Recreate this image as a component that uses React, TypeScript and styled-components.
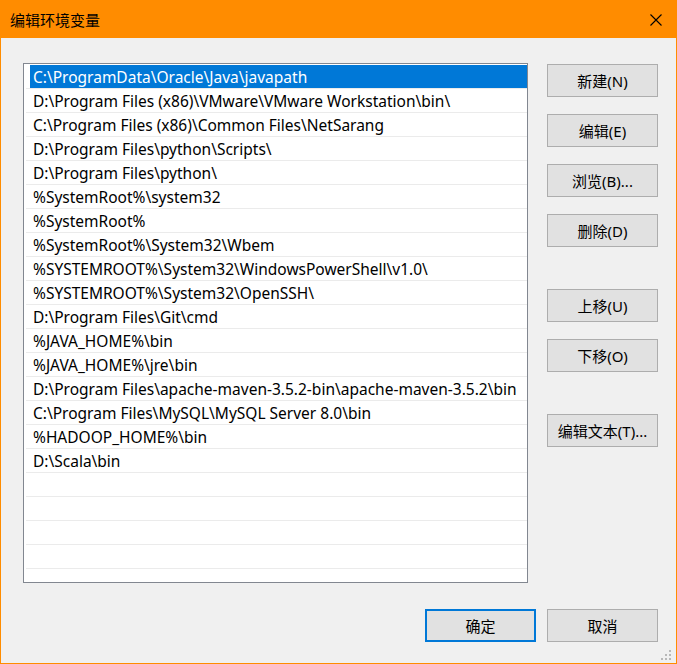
import styled, { createGlobalStyle } from 'styled-components';

const GlobalStyle = createGlobalStyle`
  html, body {
    margin: 0;
    padding: 0;
    background: #f0f0f0;
  }
  * {
    box-sizing: border-box;
  }
`;

const PATHS = [
  'C:\\ProgramData\\Oracle\\Java\\javapath',
  'D:\\Program Files (x86)\\VMware\\VMware Workstation\\bin\\',
  'C:\\Program Files (x86)\\Common Files\\NetSarang',
  'D:\\Program Files\\python\\Scripts\\',
  'D:\\Program Files\\python\\',
  '%SystemRoot%\\system32',
  '%SystemRoot%',
  '%SystemRoot%\\System32\\Wbem',
  '%SYSTEMROOT%\\System32\\WindowsPowerShell\\v1.0\\',
  '%SYSTEMROOT%\\System32\\OpenSSH\\',
  'D:\\Program Files\\Git\\cmd',
  '%JAVA_HOME%\\bin',
  '%JAVA_HOME%\\jre\\bin',
  'D:\\Program Files\\apache-maven-3.5.2-bin\\apache-maven-3.5.2\\bin',
  'C:\\Program Files\\MySQL\\MySQL Server 8.0\\bin',
  '%HADOOP_HOME%\\bin',
  'D:\\Scala\\bin',
];

const EMPTY_ROWS = 5;

const SIDE_BUTTONS = [
  { label: '新建(N)', space: 1 },
  { label: '编辑(E)', space: 17 },
  { label: '浏览(B)...', space: 17 },
  { label: '删除(D)', space: 17 },
  { label: '上移(U)', space: 42 },
  { label: '下移(O)', space: 17 },
  { label: '编辑文本(T)...', space: 42 },
];

export default function App() {
  return (
    <>
      <GlobalStyle />
      <Window>
        <TitleBar>
          <Title>编辑环境变量</Title>
          <CloseButton>
            <svg width="12" height="12" viewBox="0 0 12 12">
              <path d="M0.5 0.5 L11.5 11.5 M11.5 0.5 L0.5 11.5" stroke="#000" strokeWidth="1.1" fill="none" />
            </svg>
          </CloseButton>
        </TitleBar>

        <Body>
          <MainRow>
            <PathList>
              <Rows>
                {PATHS.map((p, i) => (
                  <Row key={p}>
                    <Cell $selected={i === 0}>{p}</Cell>
                  </Row>
                ))}
                {Array.from({ length: EMPTY_ROWS }).map((_, i) => (
                  <Row key={'empty' + i}>
                    <Cell />
                  </Row>
                ))}
              </Rows>
            </PathList>

            <SideColumn>
              {SIDE_BUTTONS.map((b) => (
                <Button key={b.label} $space={b.space}>
                  {b.label}
                </Button>
              ))}
            </SideColumn>
          </MainRow>

          <Footer>
            <Button $primary>确定</Button>
            <Button>取消</Button>
          </Footer>
        </Body>

        <Grip>
          <svg width="12" height="12" viewBox="0 0 12 12">
            <rect x="8" y="0" width="2" height="2" fill="#b8b8b8" />
            <rect x="4" y="4" width="2" height="2" fill="#b8b8b8" />
            <rect x="8" y="4" width="2" height="2" fill="#b8b8b8" />
            <rect x="0" y="8" width="2" height="2" fill="#b8b8b8" />
            <rect x="4" y="8" width="2" height="2" fill="#b8b8b8" />
            <rect x="8" y="8" width="2" height="2" fill="#b8b8b8" />
          </svg>
        </Grip>
      </Window>
    </>
  );
}

const Window = styled.div`
  position: relative;
  width: 677px;
  height: 664px;
  border: 1px solid #ff8c00;
  border-top: none;
  background: #f0f0f0;
  display: flex;
  flex-direction: column;
  font-family: 'Noto Sans', 'Noto Sans CJK SC', sans-serif;
  color: #000;
`;

const TitleBar = styled.div`
  height: 38px;
  margin: 0 -1px;
  background: #ff8c00;
  display: flex;
  align-items: center;
  justify-content: space-between;
  padding: 0 15px 0 10px;
`;

const Title = styled.div`
  font-family: 'Noto Sans CJK SC', sans-serif;
  font-size: 15px;
  line-height: 1;
  padding-top: 1px;
`;

const CloseButton = styled.div`
  width: 12px;
  height: 12px;
  display: flex;
  margin-top: 1px;
`;

const Body = styled.div`
  flex: 1;
  display: flex;
  flex-direction: column;
  padding: 25px 18px 21px 22px;
`;

const MainRow = styled.div`
  display: flex;
  gap: 19px;
`;

const PathList = styled.div`
  width: 505px;
  height: 520px;
  border: 1px solid #828790;
  background: #fff;
  overflow: hidden;
`;

const Rows = styled.div`
  padding: 1px 0 0 2px;
`;

const Row = styled.div`
  height: 24px;
  border-bottom: 1px solid #ebebeb;
  padding-left: 4px;
  display: flex;
`;

const Cell = styled.div<{ $selected?: boolean }>`
  flex: 1;
  display: flex;
  align-items: center;
  padding-left: 3px;
  font-size: 15.5px;
  white-space: nowrap;
  background: ${(p) => (p.$selected ? '#0078d7' : 'transparent')};
  color: ${(p) => (p.$selected ? '#fff' : '#000')};
`;

const SideColumn = styled.div`
  display: flex;
  flex-direction: column;
`;

const Button = styled.div<{ $space?: number; $primary?: boolean }>`
  width: 111px;
  height: 33px;
  margin-top: ${(p) => p.$space ?? 0}px;
  background: #e1e1e1;
  border: ${(p) => (p.$primary ? '2px solid #0078d7' : '1px solid #adadad')};
  display: flex;
  align-items: center;
  justify-content: center;
  font-family: 'Noto Sans', 'Noto Sans CJK SC', sans-serif;
  font-size: 15px;
  white-space: nowrap;
`;

const Footer = styled.div`
  margin-top: auto;
  display: flex;
  justify-content: flex-end;
  gap: 11px;
`;

const Grip = styled.div`
  position: absolute;
  right: 3px;
  bottom: 1px;
  width: 12px;
  height: 12px;
  display: flex;
`;
